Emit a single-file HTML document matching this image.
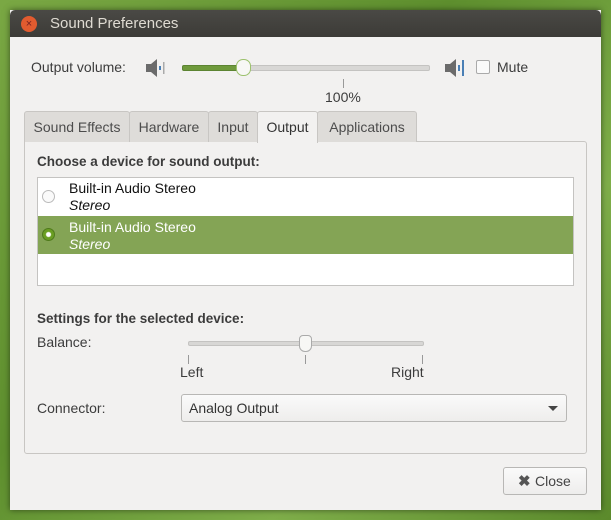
<!DOCTYPE html><html><head><style>
body{margin:0;width:611px;height:520px;overflow:hidden;background:linear-gradient(135deg,#7aa844,#5e8f2e 40%,#7fae4a 70%,#5b8a2c);font-family:"Liberation Sans",sans-serif;font-size:14px;color:#3c3c3c;position:relative}
.a{position:absolute}
.win{left:10px;top:10px;width:591px;height:500px;background:#f2f1f0;box-shadow:0 0 6px rgba(0,0,0,.5)}
.tb{left:10px;top:10px;width:591px;height:27px;background:linear-gradient(#4a4945,#3c3b37);border-radius:5px 5px 0 0}
.tab{top:111px;height:30px;background:#dedcd9;border:1px solid #c8c6c3;border-bottom:none;border-radius:3px 3px 0 0;line-height:31px;text-align:center;color:#4c4c4c}
</style></head><body>
<div class="a win"></div>
<div class="a tb"></div>
<div class="a" style="left:21px;top:16px;width:16px;height:16px;border-radius:50%;background:#e25b2f;color:#722;font-size:11px;text-align:center;line-height:16px">×</div>
<div class="a" style="left:50px;top:15px;color:#dfdbd2;font-size:15px">Sound Preferences</div>
<div class="a" style="left:31px;top:59px">Output volume:</div>
<svg class="a" style="left:144px;top:57px" width="26" height="22"><path d="M2 7h5l6-5v18l-6-5H2z" fill="#6b6b6b"/><rect x="15" y="9" width="2" height="4" fill="#4a7fb5"/><rect x="19" y="5" width="1.5" height="12" fill="#aaa"/></svg>
<div class="a" style="left:182px;top:65px;width:246px;height:4px;border-radius:2px;background:#d8d7d5;border:1px solid #c4c3c1"></div>
<div class="a" style="left:182px;top:65px;width:61px;height:4px;border-radius:2px;background:#6f9a3c;border:1px solid #5c8432"></div>
<div class="a" style="left:236px;top:59px;width:13px;height:15px;border-radius:7px;background:#f7f7f5;border:1px solid #9cc16d"></div>
<svg class="a" style="left:443px;top:57px" width="26" height="22"><path d="M2 7h5l6-5v18l-6-5H2z" fill="#6b6b6b"/><rect x="15" y="8" width="2" height="6" fill="#4a7fb5"/><rect x="19" y="3" width="2" height="16" fill="#4a7fb5"/></svg>
<div class="a" style="left:476px;top:60px;width:12px;height:12px;border:1px solid #aaa;border-radius:2px;background:#fafafa"></div>
<div class="a" style="left:497px;top:59px">Mute</div>
<div class="a" style="left:343px;top:79px;width:1px;height:9px;background:#999"></div>
<div class="a" style="left:325px;top:89px">100%</div>
<div class="a" style="left:24px;top:141px;width:561px;height:311px;border:1px solid #c8c6c3;border-radius:0 3px 3px 3px;background:#f2f1f0"></div>
<div class="a tab" style="left:24px;width:104px">Sound Effects</div>
<div class="a tab" style="left:129px;width:78px">Hardware</div>
<div class="a tab" style="left:208px;width:48px">Input</div>
<div class="a tab" style="left:257px;width:59px;height:31px;background:#f2f1f0;color:#333">Output</div>
<div class="a tab" style="left:317px;width:98px">Applications</div>
<div class="a" style="left:37px;top:154px;font-weight:bold;font-size:13.5px">Choose a device for sound output:</div>
<div class="a" style="left:37px;top:177px;width:535px;height:107px;background:#fff;border:1px solid #c4c3c1"></div>
<div class="a" style="left:38px;top:216px;width:535px;height:38px;background:#84a455"></div>
<div class="a" style="left:42px;top:190px;width:11px;height:11px;border-radius:50%;border:1px solid #bbb;background:#fafafa"></div>
<div class="a" style="left:42px;top:228px;width:11px;height:11px;border-radius:50%;border:1px solid #4f7a1c;background:radial-gradient(#fff 2px,#6a9e22 3px)"></div>
<div class="a" style="left:69px;top:180px;color:#111;line-height:17px">Built-in Audio Stereo<br><i>Stereo</i></div>
<div class="a" style="left:69px;top:219px;color:#fff;line-height:17px">Built-in Audio Stereo<br><i>Stereo</i></div>
<div class="a" style="left:37px;top:311px;font-weight:bold;font-size:13.5px">Settings for the selected device:</div>
<div class="a" style="left:37px;top:334px">Balance:</div>
<div class="a" style="left:188px;top:341px;width:234px;height:3px;border-radius:2px;background:#d8d7d5;border:1px solid #c4c3c1"></div>
<div class="a" style="left:299px;top:335px;width:11px;height:15px;border-radius:4px 4px 6px 6px;background:#f7f7f5;border:1px solid #aaa"></div>
<div class="a" style="left:188px;top:355px;width:1px;height:9px;background:#999"></div>
<div class="a" style="left:305px;top:355px;width:1px;height:9px;background:#999"></div>
<div class="a" style="left:422px;top:355px;width:1px;height:9px;background:#999"></div>
<div class="a" style="left:180px;top:364px">Left</div>
<div class="a" style="left:391px;top:364px">Right</div>
<div class="a" style="left:37px;top:400px">Connector:</div>
<div class="a" style="left:181px;top:394px;width:384px;height:26px;border:1px solid #b8b7b5;border-radius:3px;background:linear-gradient(#fafafa,#eeedec)"></div>
<div class="a" style="left:189px;top:400px;color:#333">Analog Output</div>
<div class="a" style="left:548px;top:406px;border:5px solid transparent;border-top:5px solid #444;border-bottom:none"></div>
<div class="a" style="left:503px;top:467px;width:82px;height:26px;border:1px solid #b8b7b5;border-radius:3px;background:linear-gradient(#fafafa,#eeedec)"></div>
<div class="a" style="left:518px;top:472px;color:#555;font-weight:bold;font-size:15px">✖</div>
<div class="a" style="left:535px;top:473px;color:#444">Close</div>
</body></html>
